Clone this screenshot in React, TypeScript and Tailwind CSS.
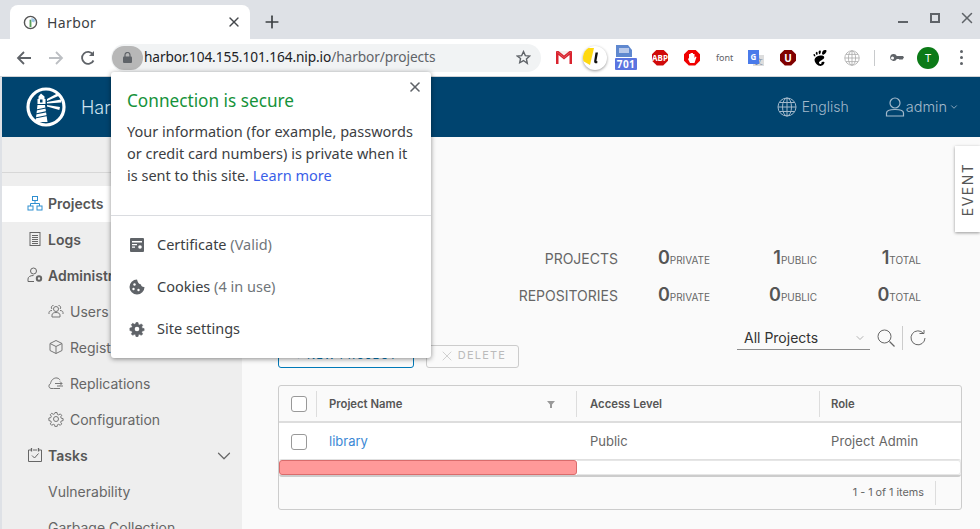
import { ChevronDown, Plus, X } from 'lucide-react';
import { SiGnome } from 'react-icons/si';

const chromeFont = "font-['Noto_Sans',sans-serif]";
const pageFont = "font-['Inter',sans-serif]";

function Organization() {
  return (
    <svg width="16" height="16" viewBox="0 0 16 16" fill="none" stroke="#2f8fd0" strokeWidth="1">
      <rect x="5.5" y="1.5" width="5" height="4" />
      <rect x="1" y="11" width="5" height="4" />
      <rect x="10" y="11" width="5" height="4" />
      <path d="M8 5.5v3M3.5 11V8.5h9V11" />
    </svg>
  );
}

function LogsIcon() {
  return (
    <svg width="16" height="16" viewBox="0 0 16 16" fill="none" stroke="#666" strokeWidth="1">
      <rect x="3" y="1.5" width="10" height="13" />
      <path d="M5 4.500h6M5 6.500h6M5 8.500h6M5 10.500h6M5 12.500h6" />
    </svg>
  );
}

function AdminIcon() {
  return (
    <svg width="16" height="16" viewBox="0 0 16 16" fill="none" stroke="#666" strokeWidth="1">
      <circle cx="6.5" cy="4" r="3" />
      <path d="M1 14.500v-2.500c0-2 2-3.500 5.500-3.500" />
      <path d="M1 14.500h6" />
      <circle cx="12" cy="11.500" r="2.200" strokeWidth="2" />
    </svg>
  );
}

function UsersIcon() {
  return (
    <svg width="16" height="16" viewBox="0 0 16 16" fill="none" stroke="#777" strokeWidth="1">
      <circle cx="8" cy="6" r="2.500" />
      <path d="M4 14v-2c0-1.500 1.500-2.500 4-2.500s4 1 4 2.500v2z" />
      <path d="M5.500 2.500a2 2 0 0 0-1.500 3.500M10.500 2.500a2 2 0 0 1 1.500 3.500M1 11V9.500c0-1 1-2 3-2M15 11V9.500c0-1-1-2-3-2" />
    </svg>
  );
}

function BoxIcon() {
  return (
    <svg width="16" height="16" viewBox="0 0 16 16" fill="none" stroke="#777" strokeWidth="1">
      <path d="M8 1.500l6 3v7l-6 3-6-3v-7z" />
      <path d="M2 4.500l6 3 6-3M8 7.500v7" />
    </svg>
  );
}

function CloudIcon() {
  return (
    <svg width="16" height="16" viewBox="0 0 16 16" fill="none" stroke="#777" strokeWidth="1">
      <path d="M5.500 13.500H3a2.500 2.500 0 0 1-.5-4.800C3 5 6 2.500 9 3c1.500.3 2.500 1 3 2.200" />
      <path d="M5.500 13.500H12M7 8.500h7M12 6.500l2 2-2 2M9 11h6" />
    </svg>
  );
}

const cogPath =
  'M7 1.500h2l.4 1.900 1.300.5 1.600-1 1.400 1.400-1 1.600.5 1.300 1.900.4v2l-1.900.4-.5 1.300 1 1.600-1.400 1.400-1.600-1-1.300.5-.4 1.900H7l-.4-1.900-1.300-.5-1.600 1-1.400-1.400 1-1.600-.5-1.300-1.900-.4V7l1.900-.4.5-1.300-1-1.600 1.400-1.400 1.600 1 1.300-.5z';

function CogIcon() {
  return (
    <svg width="16" height="16" viewBox="0 0 16 16" fill="none" stroke="#777" strokeWidth="1">
      <circle cx="8" cy="8" r="2.500" />
      <path d={cogPath} />
    </svg>
  );
}

function SolidCog() {
  return (
    <svg width="16" height="16" viewBox="0 0 16 16">
      <path d={cogPath} fill="#5f6368" stroke="#5f6368" strokeWidth="0.600" />
      <circle cx="8" cy="8" r="2.300" fill="#fff" />
    </svg>
  );
}

function TasksIcon() {
  return (
    <svg width="16" height="16" viewBox="0 0 16 16" fill="none" stroke="#666" strokeWidth="1">
      <path d="M4 3H1.500v11.500h13V3H12M6 3h4" />
      <path d="M4.500 1v3.500M11.500 1v3.500" strokeWidth="1.300" />
      <path d="M5 8.500l2.500 2.500 4-4.500" />
    </svg>
  );
}

function LighthouseLogo() {
  return (
    <svg width="40" height="40" viewBox="0 0 40 40" fill="none">
      <circle cx="20" cy="20" r="18" stroke="#fff" strokeWidth="3.200" />
      <path d="M15 6.500l3.500 3v2.500h1v5h-8v-5h1V9.500z" fill="#fff" />
      <rect x="14" y="12.500" width="2.500" height="3" fill="#00446f" />
      <path d="M11.500 18h7.500l2.500 17h-12z" fill="#fff" />
      <path d="M10 23l10-2M9.500 27l11.500-2.300M9 31l12.500-2.500" stroke="#00446f" strokeWidth="1.200" />
      <path d="M21 12l11-6 1.500 2.500L21 14zM21 15l14-2.500v3L21 16.500zM21 18l13 2-.7 3L21 19.500z" fill="#fff" />
    </svg>
  );
}

function GlobeIcon({ color, size = 20 }: { color: string; size?: number }) {
  return (
    <svg width={size} height={size} viewBox="0 0 20 20" fill="none" stroke={color} strokeWidth="1">
      <circle cx="10" cy="10" r="9" />
      <ellipse cx="10" cy="10" rx="4.500" ry="9" />
      <path d="M10 1v18M1 10h18M2.500 5.500h15M2.500 14.500h15" />
    </svg>
  );
}

function Extensions() {
  return (
    <div className="flex items-center">
      <div className="w-[28px] flex justify-center ml-[9px]">
        <svg width="16" height="13" viewBox="0 0 16 13">
          <rect width="16" height="13" fill="#d9232e" />
          <path d="M2.500 13V4l5.500 4.500L13.500 4v9z" fill="#fff" />
          <path d="M0 0l8 6.500L16 0" fill="#f7f0ee" />
          <path d="M0 0h2.500L8 4.500 13.500 0H16L8 6.500z" fill="#d9232e" />
        </svg>
      </div>
      <div className="w-[24px] h-[24px] rounded-full bg-white shadow-[0_1px_3px_rgba(0,0,0,0.4)] ml-[5px] overflow-hidden relative">
        <svg width="24" height="24" viewBox="0 0 24 24">
          <path d="M0 2h11l-4 17L0 15z" fill="#ffd90f" />
          <path d="M12.500 6.500h2.500l-1.500 8q-.2 1 1 .8l-.3 1.900q-3.500.4-3-2.500z" fill="#111" />
        </svg>
      </div>
      <div className="w-[30px] h-[25px] relative ml-[6px]">
        <svg width="16" height="12" viewBox="0 0 16 12" className="absolute left-[3px] top-0">
          <path d="M0 0h12l4 5v7H0z" fill="#5f88cf" />
          <path d="M3 3h10v5H3z" fill="#b9c9ea" />
        </svg>
        <div className={`absolute left-[2px] bottom-0 w-[22px] h-[12px] rounded-[1px] bg-[#5b74e0] text-white text-[10px] leading-[12px] font-bold text-center tracking-[0.5px] ${chromeFont}`}>
          701
        </div>
      </div>
      <div className="w-[16px] h-[16px] ml-[9px] bg-[#d00a0a] [clip-path:polygon(30%_0,70%_0,100%_30%,100%_70%,70%_100%,30%_100%,0_70%,0_30%)] text-white text-[8px] font-bold leading-[16px] text-center">
        ABP
      </div>
      <div className="ml-[16px] w-[16px] h-[16px] bg-[#f00000] [clip-path:polygon(30%_0,70%_0,100%_30%,100%_70%,70%_100%,30%_100%,0_70%,0_30%)] flex items-center justify-center">
        <svg width="10" height="12" viewBox="0 0 10 12">
          <path d="M2 6V2h1.500V1H6v1h1.500v4l1-1.500 1 .5L7.500 11H3L1 7z" fill="#fff" />
        </svg>
      </div>
      <div className={`ml-[16px] w-[16px] text-[9px] text-[#5f6368] leading-none text-center ${chromeFont}`}>font</div>
      <div className="ml-[16px] w-[16px] h-[16px] relative">
        <div className="absolute right-0 bottom-0 w-[11px] h-[11px] bg-[#ddd] text-[8px] text-[#7a8aa0] leading-[11px] text-center">文</div>
        <div className="absolute left-0 top-0 w-[11px] h-[14px] bg-[#4a7bea] text-white text-[8px] font-bold leading-[14px] text-center">G</div>
      </div>
      <div className="ml-[16px] w-[16px] h-[16px] bg-[#800000] [clip-path:polygon(30%_0,70%_0,100%_30%,100%_70%,70%_100%,30%_100%,0_70%,0_30%)] text-white text-[10px] font-bold leading-[16px] text-center">
        U
      </div>
      <SiGnome size={16} color="#000" className="ml-[16px]" />
      <div className="ml-[16px]">
        <GlobeIcon color="#aaa" size={16} />
      </div>
      <div className="w-px h-[16px] bg-[#c8cacc] ml-[14px]" />
      <svg width="14" height="8" viewBox="0 0 14 8" className="ml-[15px]">
        <path d="M3.500 0a3.500 3.500 0 1 0 3.300 5H9l1 1 1-1 1 1 2-2.500L13 2H6.800A3.500 3.500 0 0 0 3.500 0zm-1 2.500a1.500 1.500 0 1 1 0 3 1.500 1.500 0 0 1 0-3z" fill="#5f6368" />
      </svg>
      <div className={`ml-[13px] w-[22px] h-[22px] rounded-full bg-[#0b7a17] text-white text-[11px] leading-[22px] text-center ${chromeFont}`}>T</div>
      <div className="ml-[21px] flex flex-col gap-[3px]">
        <span className="w-[3px] h-[3px] rounded-full bg-[#5f6368]" />
        <span className="w-[3px] h-[3px] rounded-full bg-[#5f6368]" />
        <span className="w-[3px] h-[3px] rounded-full bg-[#5f6368]" />
      </div>
    </div>
  );
}

function BrowserBar() {
  return (
    <div className={chromeFont}>
      <div className="h-[39px] bg-[#dee1e6] flex items-end pl-[10px]">
        <div className="w-[240px] h-[34px] bg-white rounded-t-[8px] flex items-center pl-[13px] pr-[8px]">
          <svg width="15" height="15" viewBox="0 0 16 16" fill="none">
            <circle cx="8" cy="8" r="6.500" stroke="#555" strokeWidth="1.500" />
            <path d="M7 5h2v8H7z" fill="#5aa05a" />
            <path d="M9 3l4 2-1 3-3-1z" fill="#9cc4e4" />
          </svg>
          <span className="ml-[9px] text-[14px] text-[#3c4043] tracking-[0.4px]">Harbor</span>
          <X size={16} color="#45484c" strokeWidth={2} className="ml-auto" />
        </div>
        <Plus size={20} color="#3c4043" strokeWidth={2} className="ml-[12px] mb-[7px]" />
        <div className="ml-auto flex items-center mb-[12px] pr-[4px]">
          <span className="w-[10px] h-[2px] bg-[#5f6368] mt-[8px] mr-[22px]" />
          <span className="w-[10px] h-[10px] border-2 border-[#5f6368] mr-[18px]" />
          <X size={18} color="#5f6368" strokeWidth={2} />
        </div>
      </div>
      <div className="h-[38px] bg-white flex items-center border-b border-[#d0d3d6]">
        <svg width="16" height="16" viewBox="0 0 16 16" fill="none" stroke="#5f6368" strokeWidth="1.800" className="ml-[16px]">
          <path d="M15 8H2M8 2L2 8l6 6" />
        </svg>
        <svg width="16" height="16" viewBox="0 0 16 16" fill="none" stroke="#bcbfc3" strokeWidth="1.800" className="ml-[16px]">
          <path d="M1 8h13M8 2l6 6-6 6" />
        </svg>
        <svg width="16" height="16" viewBox="0 0 16 16" fill="none" stroke="#5f6368" strokeWidth="1.800" className="ml-[16px]">
          <path d="M13.500 10.500A6 6 0 1 1 13 4.500" />
          <path d="M14 1v5H9z" fill="#5f6368" stroke="none" />
        </svg>
        <div className="ml-[15px] w-[430px] h-[28px] rounded-full bg-[#f1f3f4] flex items-center pl-px">
          <div className="w-[31px] h-[24px] rounded-full bg-[#b7b7b7] flex items-center justify-center">
            <svg width="9" height="11" viewBox="0 0 9 11">
              <path d="M2 5V3a2.500 2.500 0 0 1 5 0v2" fill="none" stroke="#5f6368" strokeWidth="1.200" />
              <rect y="4.500" width="9" height="6.500" rx="1" fill="#5f6368" />
            </svg>
          </div>
          <span className="ml-px text-[13.700px] tracking-[-0.1px] text-[#202124] whitespace-nowrap">
            harbor.104.155.101.164.nip.io<span className="text-[#5f6368]">/harbor/projects</span>
          </span>
          <svg width="15" height="15" viewBox="0 0 24 24" fill="none" stroke="#5f6368" strokeWidth="2.200" className="ml-auto mr-[10px]">
            <path d="M12 2.500l2.900 6.400 7 .8-5.200 4.700 1.400 6.900L12 16.900l-6.100 3.500 1.400-6.900L2.100 9.700l7-.8z" />
          </svg>
        </div>
        <Extensions />
      </div>
    </div>
  );
}

function SiteInfoPopup() {
  const rows = [
    {
      label: 'Certificate',
      note: ' (Valid)',
      icon: (
        <svg width="14" height="14" viewBox="0 0 14 14">
          <rect width="14" height="14" rx="1" fill="#5f6368" />
          <path d="M2 3h10v1.500H2zM2 6h5v1.300H2zM2 8.500h3v1.300H2z" fill="#fff" />
          <circle cx="10" cy="9" r="1.800" fill="#fff" />
        </svg>
      ),
    },
    {
      label: 'Cookies',
      note: ' (4 in use)',
      icon: (
        <svg width="16" height="16" viewBox="0 0 16 16">
          <path d="M8 .5a7.500 7.500 0 1 0 7.500 7.500c-2 .3-3.500-1-3.500-2.500C10 5.500 8.500 3 8 .5z" fill="#5f6368" />
          <circle cx="5.500" cy="5.500" r="1.200" fill="#fff" />
          <circle cx="4.500" cy="10" r="1.200" fill="#fff" />
          <circle cx="9.500" cy="11" r="1.200" fill="#fff" />
        </svg>
      ),
    },
    { label: 'Site settings', note: '', icon: <SolidCog /> },
  ];

  return (
    <div className={`absolute left-[111px] top-[72px] w-[320px] h-[286px] bg-white rounded-[3px] shadow-[0_1px_5px_rgba(0,0,0,0.45)] ${chromeFont}`}>
      <X size={16} color="#5f6368" strokeWidth={2.400} className="absolute right-[8px] top-[7px]" />
      <div className="h-[144px] border-b border-[#dadce0] pl-[16px] pr-[14px] pt-[16px]">
        <div className="text-[17.200px] leading-[26px] text-[#15923a]">Connection is secure</div>
        <p className="mt-[6px] text-[14.500px] leading-[22px] text-[#3c4043]">
          Your information (for example, passwords or credit card numbers) is private when it is sent to this site.{' '}
          <span className="text-[#3a5ee8]">Learn more</span>
        </p>
      </div>
      <div className="pt-[8px]">
        {rows.map((r) => (
          <div key={r.label} className="h-[42px] flex items-center pl-[18px]">
            <div className="w-[16px] flex justify-center">{r.icon}</div>
            <span className="ml-[12px] text-[14.500px] text-[#3c4043]">
              {r.label}
              <span className="text-[#70757a]">{r.note}</span>
            </span>
          </div>
        ))}
      </div>
    </div>
  );
}

function NavItem({ icon, label, bold, sub, active }: { icon?: React.ReactNode; label: string; bold?: boolean; sub?: boolean; active?: boolean }) {
  return (
    <div className={`h-[36px] pb-[2px] flex items-center ${sub ? 'pl-[46px]' : 'pl-[25px]'} ${active ? 'bg-white' : ''}`}>
      {icon && <span className={`${sub ? 'mr-[6px]' : 'mr-[5px]'} flex`}>{icon}</span>}
      <span className={`whitespace-nowrap ${bold ? 'text-[14px] font-semibold text-[#565656]' : 'text-[14px] text-[#666]'}`}>{label}</span>
    </div>
  );
}

function Sidebar() {
  return (
    <div className="w-[240px] bg-[#eeeeee] shrink-0">
      <div className="h-[36px] border-b border-[#d7d7d7] mb-[13px]" />
      <NavItem icon={<Organization />} label="Projects" bold active />
      <NavItem icon={<LogsIcon />} label="Logs" bold />
      <NavItem icon={<AdminIcon />} label="Administration" bold />
      <NavItem sub icon={<UsersIcon />} label="Users" />
      <NavItem sub icon={<BoxIcon />} label="Registries" />
      <NavItem sub icon={<CloudIcon />} label="Replications" />
      <NavItem sub icon={<CogIcon />} label="Configuration" />
      <div className="relative">
        <NavItem icon={<TasksIcon />} label="Tasks" bold />
        <ChevronDown size={22} color="#666" strokeWidth={1.300} className="absolute left-[211px] top-[7px]" />
      </div>
      <NavItem sub label="Vulnerability" />
      <NavItem sub label="Garbage Collection" />
    </div>
  );
}

function Stat({ value, label, width }: { value: number; label: string; width: string }) {
  return (
    <div className={`${width} mb-[3px] flex items-baseline justify-end`}>
      <span className="text-[18px] font-semibold text-[#555]">{value}</span>
      <span className="text-[10px] text-[#666]">{label}</span>
    </div>
  );
}

function Stats() {
  const rows = [
    { name: 'PROJECTS', values: [0, 1, 1] },
    { name: 'REPOSITORIES', values: [0, 0, 0] },
  ];
  return (
    <div className="pr-[59px]">
      {rows.map((r) => (
        <div key={r.name} className="h-[37px] pb-[2px] flex items-center justify-end">
          <span className="text-[14px] text-[#666]">{r.name}</span>
          <Stat value={r.values[0]} label="PRIVATE" width="w-[92px]" />
          <Stat value={r.values[1]} label="PUBLIC" width="w-[107px]" />
          <Stat value={r.values[2]} label="TOTAL" width="w-[104px]" />
        </div>
      ))}
    </div>
  );
}

function Toolbar() {
  return (
    <div className="mt-[11px] flex justify-between">
      <div className="mt-[19px] flex gap-[12px] h-[23px]">
        <div className="w-[136px] pb-[2px] rounded-[3px] border border-[#0079b8] flex items-center justify-center text-[11px] tracking-[1px] text-[#0079b8]">
          + NEW PROJECT
        </div>
        <div className="w-[93px] pb-[2px] rounded-[3px] border border-[#ccc] flex items-center justify-center gap-[3px] text-[11px] tracking-[1.200px] text-[#bbb]">
          <X size={16} color="#bbb" strokeWidth={1} />
          DELETE
        </div>
      </div>
      <div className="flex items-start pr-[54px]">
        <div className="w-[133px] h-[24px] border-b border-[#8c8c8c] flex items-center pl-[7px] pr-[4px] text-[14px] text-[#333]">
          All Projects
          <ChevronDown size={12} color="#999" strokeWidth={1.500} className="ml-auto" />
        </div>
        <svg width="18" height="18" viewBox="0 0 18 18" fill="none" stroke="#666" strokeWidth="1" className="ml-[7px] mt-[3px]">
          <circle cx="7.500" cy="7.500" r="6.500" />
          <path d="M12.500 12.500L17.500 17.500" strokeWidth="1.300" />
        </svg>
        <div className="w-px h-[24px] bg-[#ccc] ml-[7px]" />
        <svg width="16" height="16" viewBox="0 0 16 16" fill="none" stroke="#666" strokeWidth="1" className="ml-[7px] mt-[4px]">
          <path d="M13.500 3.500A7 7 0 1 0 15 8" />
          <path d="M9.500 3.500h4.500V0" />
        </svg>
      </div>
    </div>
  );
}

function Checkbox() {
  return <div className="w-[16px] h-[16px] rounded-[3px] border border-[#999] bg-white" />;
}

function ProjectsTable() {
  return (
    <div className="mt-[17px] mr-[18px] h-[125px] rounded-[3px] border border-[#ccc] overflow-hidden flex flex-col">
      <div className="h-[37px] flex items-center border-b-2 border-[#ddd] text-[11.300px] font-semibold text-[#565656]">
        <div className="w-[38px] h-[26px] flex items-center pl-[12px] border-r border-[#ddd]">
          <Checkbox />
        </div>
        <div className="w-[260px] h-[26px] pt-px flex items-center justify-between pl-[12px] pr-[21px] border-r border-[#ddd]">
          Project Name
          <svg width="8" height="8" viewBox="0 0 8 8">
            <path d="M0 1h8L5 4.500V8H3V4.500z" fill="#999" />
          </svg>
        </div>
        <div className="w-[243px] h-[26px] pt-px flex items-center pl-[13px] border-r border-[#ddd]">Access Level</div>
        <div className="pl-[11px] pt-px">Role</div>
      </div>
      <div className="h-[36px] pt-[1px] bg-white flex items-center text-[13px] text-[#666]">
        <div className="w-[38px] pl-[12px]">
          <Checkbox />
        </div>
        <div className="w-[261px] pl-[12px] text-[#3b88d5]">library</div>
        <div className="w-[243px] pl-[12px]">Public</div>
        <div className="pl-[10px] tracking-[0.1px]">Project Admin</div>
      </div>
      <div className="h-[18px] border-t border-[#e0e0e0] border-b-2 border-b-[#ccc] bg-white rounded-[3px] flex">
        <div className="w-[298px] h-[15px] bg-[#ff9999] border border-[#d96c6c] rounded-[3px]" />
        <div className="flex-1 h-[15px] border-y border-r border-[#e6e6e6] rounded-r-[3px]" />
      </div>
      <div className="flex-1 flex items-center justify-end pr-[37px] text-[10.800px] text-[#666]">
        1 - 1 of 1 items
        <span className="w-px h-[24px] bg-[#ddd] ml-[11px] -mr-[12px]" />
      </div>
    </div>
  );
}

export default function App() {
  return (
    <div className="relative w-[980px] h-[529px] overflow-hidden bg-[#fafafa]">
      <BrowserBar />
      <div className={`flex flex-col h-[452px] border-l-2 border-[#dee1e6] ${pageFont}`}>
        <div className="h-[60px] bg-[#00446f] shrink-0 flex items-center pl-[24px] pr-[21px]">
          <LighthouseLogo />
          <span className="ml-[15px] text-[18px] font-light text-[#cde3f1]">Harbor</span>
          <div className="ml-auto flex items-center text-[#a3b9cb]">
            <GlobeIcon color="#a3b9cb" />
            <span className="ml-[5px] pb-[2px] text-[14px] font-light">English</span>
            <svg width="20" height="20" viewBox="0 0 20 20" fill="none" stroke="#a3b9cb" strokeWidth="1.200" className="ml-[36px]">
              <circle cx="10" cy="6" r="5" />
              <path d="M1.500 19v-3c0-2 2-3.500 8.500-3.500s8.500 1.500 8.500 3.500v3z" />
            </svg>
            <span className="ml-[1px] pb-[1px] text-[14.500px] font-light">admin</span>
            <ChevronDown size={10} className="ml-[2px]" />
          </div>
        </div>
        <div className="flex-1 flex min-h-0 overflow-hidden">
          <Sidebar />
          <div className="flex-1 pl-[36px] pt-[104px]">
            <Stats />
            <Toolbar />
            <ProjectsTable />
          </div>
        </div>
      </div>
      <SiteInfoPopup />
      <div className={`absolute right-0 top-[146px] w-[25px] h-[86px] bg-white shadow-[0_1px_3px_rgba(0,0,0,0.4)] flex items-center justify-center ${pageFont}`}>
        <span className="-rotate-90 text-[14px] tracking-[1.500px] text-[#565656]">EVENT</span>
      </div>
    </div>
  );
}
